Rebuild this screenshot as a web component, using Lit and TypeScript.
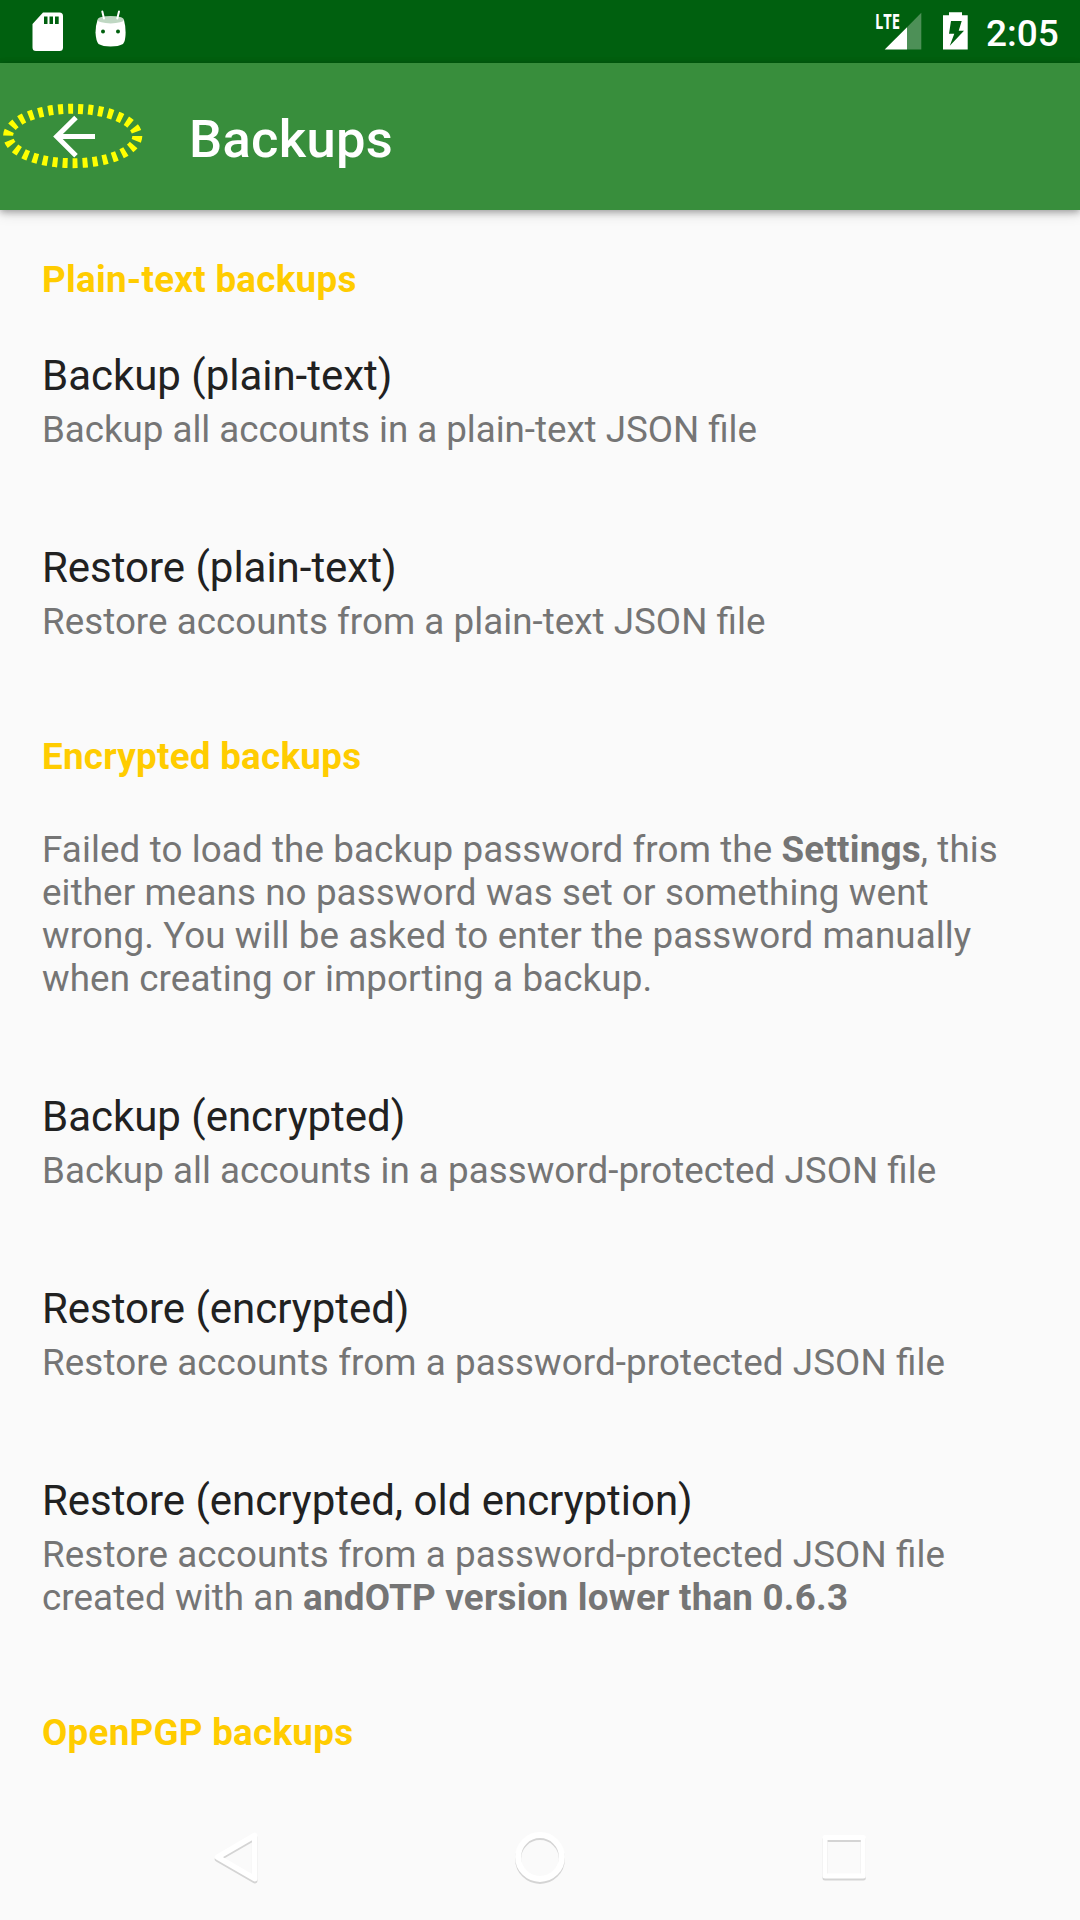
import { LitElement, html, css, svg } from "lit";
import { customElement } from "lit/decorators.js";
import { styleMap } from "lit/directives/style-map.js";

type Entry =
  | { kind: "heading"; text: string }
  | { kind: "note"; body: unknown; tracking: number }
  | { kind: "item"; title: string; body: unknown; tracking: number };

// tracking: letter spacing of the body text, in px
const ENTRIES: Entry[] = [
  { kind: "heading", text: "Plain-text backups" },
  { kind: "item", title: "Backup (plain-text)", body: "Backup all accounts in a plain-text JSON file", tracking: -0.04 },
  { kind: "item", title: "Restore (plain-text)", body: "Restore accounts from a plain-text JSON file", tracking: 0.03 },
  { kind: "heading", text: "Encrypted backups" },
  {
    kind: "note",
    body: html`Failed to load the backup password from the <b>Settings</b>, this either means no password was set or something went wrong. You will be asked to enter the password manually when creating or importing a backup.`,
    tracking: 0.105,
  },
  { kind: "item", title: "Backup (encrypted)", body: "Backup all accounts in a password-protected JSON file", tracking: 0.03 },
  { kind: "item", title: "Restore (encrypted)", body: "Restore accounts from a password-protected JSON file", tracking: 0.095 },
  {
    kind: "item",
    title: "Restore (encrypted, old encryption)",
    body: html`Restore accounts from a password-protected JSON file created with an <b>andOTP version lower than 0.6.3</b>`,
    tracking: 0.095,
  },
  { kind: "heading", text: "OpenPGP backups" },
];

@customElement("status-bar")
export class StatusBar extends LitElement {
  static styles = css`
    :host { display: flex; height: 63px; background: #00600f; justify-content: space-between; color: #fff; }
    svg { display: block; }
    .lte { font: 700 21px "Open Sans", sans-serif; }
    .right { display: flex; }
    .time { font: 500 37px/63px Roboto, sans-serif; width: 94px; margin-top: 2px; height: 61px; }
  `;
  render() {
    return html`
      <svg width="200" height="63" viewBox="0 0 200 63" fill="#fff">
        <path fill-rule="evenodd" d="M43 12.500H59.500Q63 12.500 63 16V47.500Q63 51 59.500 51H36Q32.500 51 32.500 47.500V24ZM44 16.500V24H47.500V16.500ZM49.500 16.500V24H53V16.500ZM55 16.500V24H58.700V16.500Z"/>
        <path d="M97.500 20Q95.500 26 95.500 32.500Q96 41 98.500 44Q103 46.500 110.500 46.500Q118.500 46.500 123 44Q125.600 41 125.600 32.500Q125.600 26 124 20Z"/>
        <ellipse cx="110.700" cy="19.700" rx="13.200" ry="3.700" fill="#bfd7c3"/>
        <path d="M102.300 11.500L104 18.500M119 11.500L117.300 18.500" stroke="#fff" stroke-width="2" stroke-linecap="round"/>
        <circle cx="103" cy="31.500" r="2" fill="#00600f"/><circle cx="118" cy="31.500" r="2" fill="#00600f"/>
      </svg>
      <div class="right">
        <svg width="146" height="63" viewBox="840 0 146 63" fill="#fff">
          <path d="M921.300 12.800V49.500H907V27.200Z" opacity=".3"/>
          <path d="M907 27.200V49.500H884.700Z"/>
          <text class="lte" x="875" y="29" textLength="25" lengthAdjust="spacingAndGlyphs">LTE</text>
          <path fill-rule="evenodd" d="M949 12.300H962V15.300H967.700V49.500H943V15.300H949ZM951 21L949 33.700H954.300L949.800 45.700L964 30.700H958.700L961.700 21Z"/>
        </svg>
        <div class="time">2:05</div>
      </div>`;
  }
}

@customElement("app-bar")
export class AppBar extends LitElement {
  static styles = css`
    :host { display: flex; height: 146.500px; background: #388e3c; color: #fff; position: relative; box-shadow: 0 2px 7px rgba(0,0,0,.32), 0 5px 12px rgba(0,0,0,.1); align-items: flex-start; }
    .back { display: block; flex: none; width: 147px; height: 147px; margin-right: 42px; }
    .title { font: 500 52.500px/62px Roboto, sans-serif; letter-spacing: .32px; margin-top: 45px; }
  `;
  render() {
    return html`
      <svg class="back" viewBox="0 63 147 147" fill="none">
        <ellipse cx="72.700" cy="136" rx="64.600" ry="27.200" stroke="#ff0" stroke-width="10" stroke-dasharray="5 5.020"/>
        <path d="M95 136.600H57M76 117.500L56.700 136.600L76 155.800" stroke="#fff" stroke-width="5"/>
      </svg>
      <div class="title">Backups</div>`;
  }
}

@customElement("backup-list")
export class BackupList extends LitElement {
  static styles = css`
    :host { display: block; padding: 48px 42px 0; font-family: Roboto, sans-serif; font-feature-settings: "liga" 1; }
    .heading { font-size: 36.750px; line-height: 43px; font-weight: 700; letter-spacing: .27px; color: #fc0; margin-bottom: 50px; }
    .entry { margin-bottom: 92px; }
    .title { font-size: 42px; line-height: 49px; letter-spacing: -.02px; margin-bottom: 8px; color: #212121; }
    .body { font-size: 36.750px; line-height: 43px; color: #757575; }
    .body b { letter-spacing: .22px; }
  `;
  render() {
    return ENTRIES.map((e) =>
      e.kind === "heading"
        ? html`<div class="heading">${e.text}</div>`
        : html`<div class="entry">
            ${e.kind === "item" ? html`<div class="title">${e.title}</div>` : ""}
            <div class="body" style=${styleMap({ letterSpacing: `${e.tracking}px` })}>${e.body}</div>
          </div>`
    );
  }
}

@customElement("nav-bar")
export class NavBar extends LitElement {
  static styles = css`
    :host { display: block; height: 126px; }
    svg { display: block; }
    .shade { filter: blur(.6px); }
  `;
  render() {
    const shapes = svg`
      <path stroke-width="5.500" d="M254.700 1835.500V1878.700L217.500 1857.100Z"/>
      <circle stroke-width="6" cx="540" cy="1857" r="21.900"/>
      <rect stroke-width="5" x="825" y="1837.500" width="38.300" height="38.500"/>`;
    return html`
      <svg width="1080" height="126" viewBox="0 1794 1080 126" fill="none" stroke-linejoin="round">
        <g class="shade" stroke="#d4d4d4" transform="translate(0 2)">${shapes}</g>
        <g stroke="#fff">${shapes}</g>
      </svg>`;
  }
}

@customElement("app-root")
export class AppRoot extends LitElement {
  static styles = css`
    :host { display: flex; flex-direction: column; width: 1080px; height: 1920px; overflow: hidden; background: #fafafa; }
    status-bar, app-bar, nav-bar { flex: none; }
    backup-list { flex: 1; min-height: 0; }
  `;
  render() {
    return html`<status-bar></status-bar><app-bar></app-bar><backup-list></backup-list><nav-bar></nav-bar>`;
  }
}
